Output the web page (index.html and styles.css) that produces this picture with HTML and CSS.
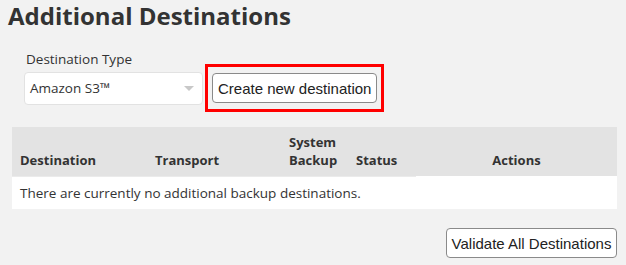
FILE: index.html
```html
<!DOCTYPE html>
<html lang="en">
<head>
    <meta charset="UTF-8">
    <title>Additional Destinations</title>
    <link rel="stylesheet" href="styles.css">
</head>
<body>
    <div class="page">
        <h1>Additional Destinations</h1>

        <div class="dest-type">
            <label class="dest-label" for="destType">Destination Type</label>
            <div class="dest-row">
                <div class="select-box">
                    <span id="destType">Amazon S3™</span>
                    <span class="arrow"></span>
                </div>
                <div class="highlight">
                    <button type="button" class="btn">Create new destination</button>
                </div>
            </div>
        </div>

        <table class="dest-table">
            <colgroup>
                <col class="c-dest">
                <col class="c-transport">
                <col class="c-system">
                <col class="c-status">
                <col>
            </colgroup>
            <thead>
                <tr>
                    <th>Destination</th>
                    <th>Transport</th>
                    <th>System<br>Backup</th>
                    <th>Status</th>
                    <th class="actions">Actions</th>
                </tr>
            </thead>
            <tbody>
                <tr>
                    <td colspan="5">There are currently no additional backup destinations.</td>
                </tr>
            </tbody>
        </table>

        <div class="footer">
            <button type="button" class="btn">Validate All Destinations</button>
        </div>
    </div>
</body>
</html>
```

FILE: styles.css
```css
body {
    margin: 0;
    background: #f2f2f2;
    color: #333;
    font-family: "Open Sans", sans-serif;
}

.page {
    padding: 0 9px 0 12px;
}

h1 {
    margin: 0 0 0 -4px;
    font-size: 24px;
    line-height: 32px;
    font-weight: 700;
    color: #333;
}

.dest-type {
    margin: 20px 0 0 12px;
}

.dest-label {
    display: block;
    padding-left: 2px;
    font-size: 13.5px;
    line-height: 15px;
    margin-bottom: -3px;
}

.dest-row {
    display: flex;
    align-items: center;
    gap: 2px;
}

.select-box {
    box-sizing: border-box;
    width: 179px;
    height: 33px;
    display: flex;
    align-items: center;
    justify-content: space-between;
    padding: 0 8px 0 5px;
    background: #fff;
    border: 1px solid #e2e2e2;
    border-radius: 4px;
    font-size: 13.5px;
}

.arrow {
    width: 0;
    height: 0;
    border-left: 5px solid transparent;
    border-right: 5px solid transparent;
    border-top: 5px solid #c8c8c8;
}

.highlight {
    border: 3px solid #f00;
    padding: 6px 4px;
    display: flex;
}

.btn {
    box-sizing: border-box;
    height: 30px;
    padding: 0 5px;
    background: #fff;
    border: 1px solid #8a8a8a;
    border-radius: 4px;
    color: #222;
    font-family: "Liberation Sans", Arial, sans-serif;
    font-size: 15px;
}

.dest-table {
    width: 605px;
    margin-top: 15px;
    border-collapse: collapse;
    table-layout: fixed;
    font-size: 13px;
}

.c-dest { width: 135px; }
.c-transport { width: 134px; }
.c-system { width: 67px; }
.c-status { width: 68px; }

.dest-table th {
    height: 42px;
    padding: 0 8px 7px;
    background: #e3e3e3;
    border-bottom: 1px solid #ebebeb;
    text-align: left;
    vertical-align: bottom;
    font-weight: 700;
    line-height: 18px;
}

.dest-table th.actions {
    text-align: center;
    border-bottom-color: #fff;
}

.dest-table td {
    height: 32px;
    padding: 0 8px;
    background: #fff;
    font-size: 13.5px;
    line-height: 18px;
}

.footer {
    display: flex;
    justify-content: flex-end;
    width: 605px;
    margin-top: 19px;
}

.footer .btn {
    width: 171px;
    padding: 0;
}
```
